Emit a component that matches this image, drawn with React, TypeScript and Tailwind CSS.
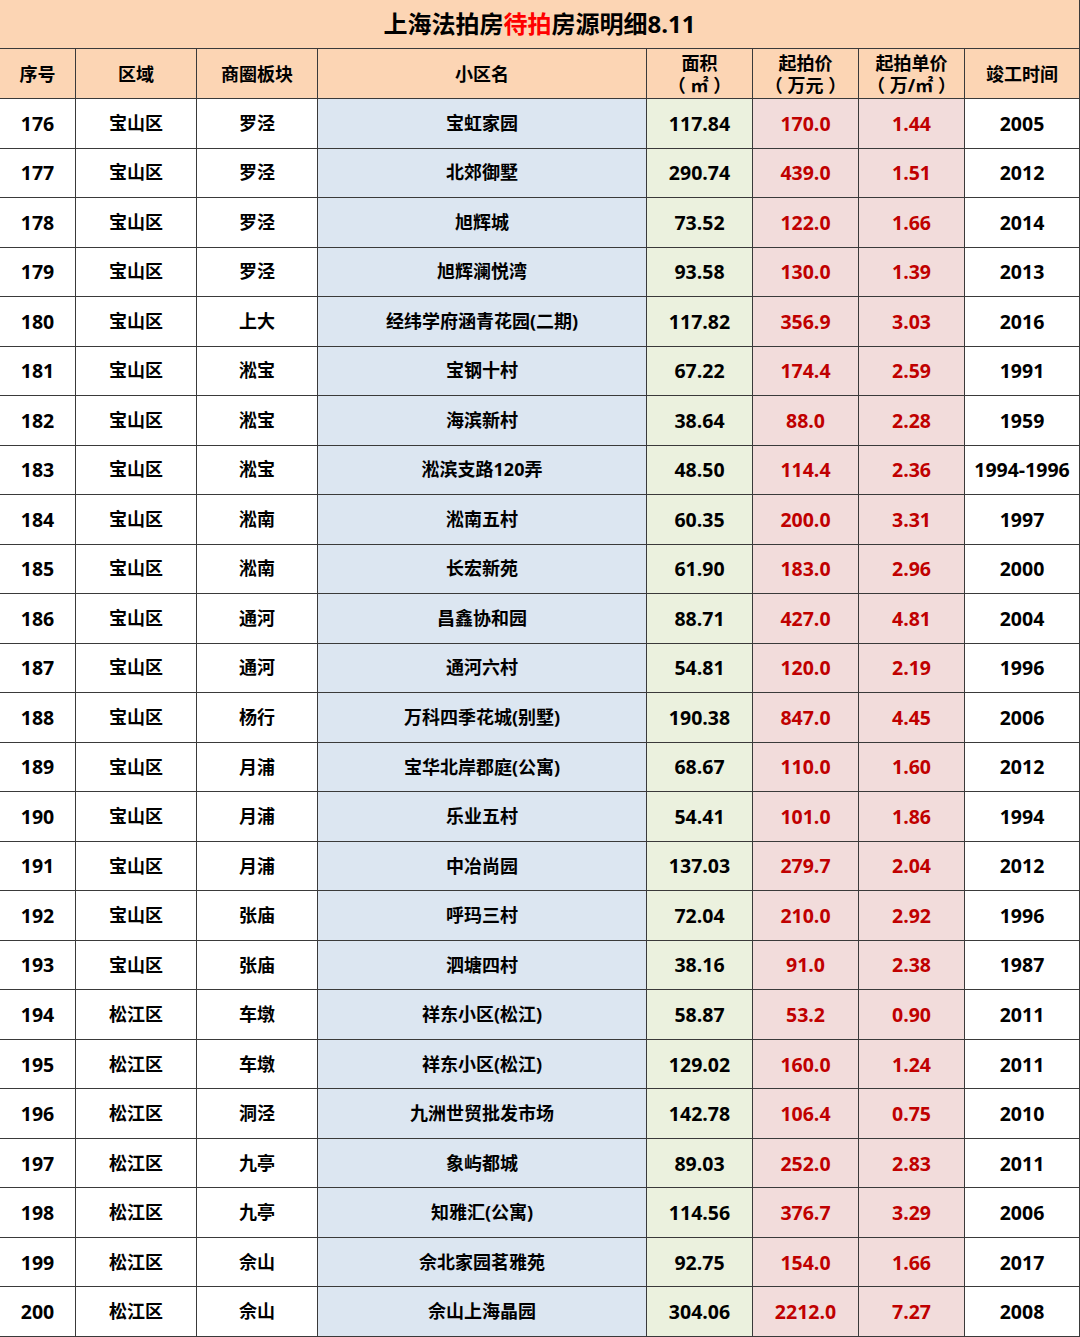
const rows: [string, string, string, string, string, string, string, string][] = [
  ["176", "宝山区", "罗泾", "宝虹家园", "117.84", "170.0", "1.44", "2005"],
  ["177", "宝山区", "罗泾", "北郊御墅", "290.74", "439.0", "1.51", "2012"],
  ["178", "宝山区", "罗泾", "旭辉城", "73.52", "122.0", "1.66", "2014"],
  ["179", "宝山区", "罗泾", "旭辉澜悦湾", "93.58", "130.0", "1.39", "2013"],
  ["180", "宝山区", "上大", "经纬学府涵青花园(二期)", "117.82", "356.9", "3.03", "2016"],
  ["181", "宝山区", "淞宝", "宝钢十村", "67.22", "174.4", "2.59", "1991"],
  ["182", "宝山区", "淞宝", "海滨新村", "38.64", "88.0", "2.28", "1959"],
  ["183", "宝山区", "淞宝", "淞滨支路120弄", "48.50", "114.4", "2.36", "1994-1996"],
  ["184", "宝山区", "淞南", "淞南五村", "60.35", "200.0", "3.31", "1997"],
  ["185", "宝山区", "淞南", "长宏新苑", "61.90", "183.0", "2.96", "2000"],
  ["186", "宝山区", "通河", "昌鑫协和园", "88.71", "427.0", "4.81", "2004"],
  ["187", "宝山区", "通河", "通河六村", "54.81", "120.0", "2.19", "1996"],
  ["188", "宝山区", "杨行", "万科四季花城(别墅)", "190.38", "847.0", "4.45", "2006"],
  ["189", "宝山区", "月浦", "宝华北岸郡庭(公寓)", "68.67", "110.0", "1.60", "2012"],
  ["190", "宝山区", "月浦", "乐业五村", "54.41", "101.0", "1.86", "1994"],
  ["191", "宝山区", "月浦", "中冶尚园", "137.03", "279.7", "2.04", "2012"],
  ["192", "宝山区", "张庙", "呼玛三村", "72.04", "210.0", "2.92", "1996"],
  ["193", "宝山区", "张庙", "泗塘四村", "38.16", "91.0", "2.38", "1987"],
  ["194", "松江区", "车墩", "祥东小区(松江)", "58.87", "53.2", "0.90", "2011"],
  ["195", "松江区", "车墩", "祥东小区(松江)", "129.02", "160.0", "1.24", "2011"],
  ["196", "松江区", "洞泾", "九洲世贸批发市场", "142.78", "106.4", "0.75", "2010"],
  ["197", "松江区", "九亭", "象屿都城", "89.03", "252.0", "2.83", "2011"],
  ["198", "松江区", "九亭", "知雅汇(公寓)", "114.56", "376.7", "3.29", "2006"],
  ["199", "松江区", "佘山", "佘北家园茗雅苑", "92.75", "154.0", "1.66", "2017"],
  ["200", "松江区", "佘山", "佘山上海晶园", "304.06", "2212.0", "7.27", "2008"],
]

const cols = "grid grid-cols-[76px_121px_121px_329px_106px_106px_106px_115px]"
const cell = "flex items-center justify-center border-r border-b border-[#3a3a3a] text-center"

// background / text colour per column; numbers set a touch larger to match the sheet's digit font
const colStyle = [
  "bg-white text-black text-[19.5px]",
  "bg-white text-black",
  "bg-white text-black",
  "bg-[#dce6f1] text-black",
  "bg-[#ebf1de] text-black text-[19.5px]",
  "bg-[#f2dcdb] text-[#c00000] text-[19.5px]",
  "bg-[#f2dcdb] text-[#c00000] text-[19.5px]",
  "bg-white text-black text-[19.5px]",
]

export default function App() {
  return (
    <div
      className="w-[1080px] h-[1337px] flex flex-col bg-white font-bold text-[18px]"
      style={{ fontFamily: '"Open Sans", "Noto Sans CJK SC", sans-serif' }}
    >
      <div className="h-[49px] shrink-0 flex items-center justify-center bg-[#fcd5b4] border-b border-r border-[#3a3a3a] text-[24px] text-black">
        <span>
          上海法拍房<span className="text-[#ff0000]">待拍</span>房源明细8.11
        </span>
      </div>

      <div className={`${cols} h-[50px] shrink-0 bg-[#fcd5b4] text-[18px] leading-[22px] text-black`}>
        <div className={cell}>序号</div>
        <div className={cell}>区域</div>
        <div className={cell}>商圈板块</div>
        <div className={cell}>小区名</div>
        <div className={`${cell} flex-col`}>
          <span>面积</span>
          <span className="whitespace-pre">（ ㎡ ）</span>
        </div>
        <div className={`${cell} flex-col`}>
          <span>起拍价</span>
          <span className="whitespace-pre">（ 万元 ）</span>
        </div>
        <div className={`${cell} flex-col`}>
          <span>起拍单价</span>
          <span className="whitespace-pre">（ 万/㎡ ）</span>
        </div>
        <div className={cell}>竣工时间</div>
      </div>

      <div className={`${cols} flex-1 grid-rows-[repeat(25,minmax(0,1fr))]`}>
        {rows.map((r) =>
          r.map((v, i) => (
            <div key={r[0] + "-" + i} className={`${cell} ${colStyle[i]}`}>
              {v}
            </div>
          ))
        )}
      </div>
    </div>
  )
}
